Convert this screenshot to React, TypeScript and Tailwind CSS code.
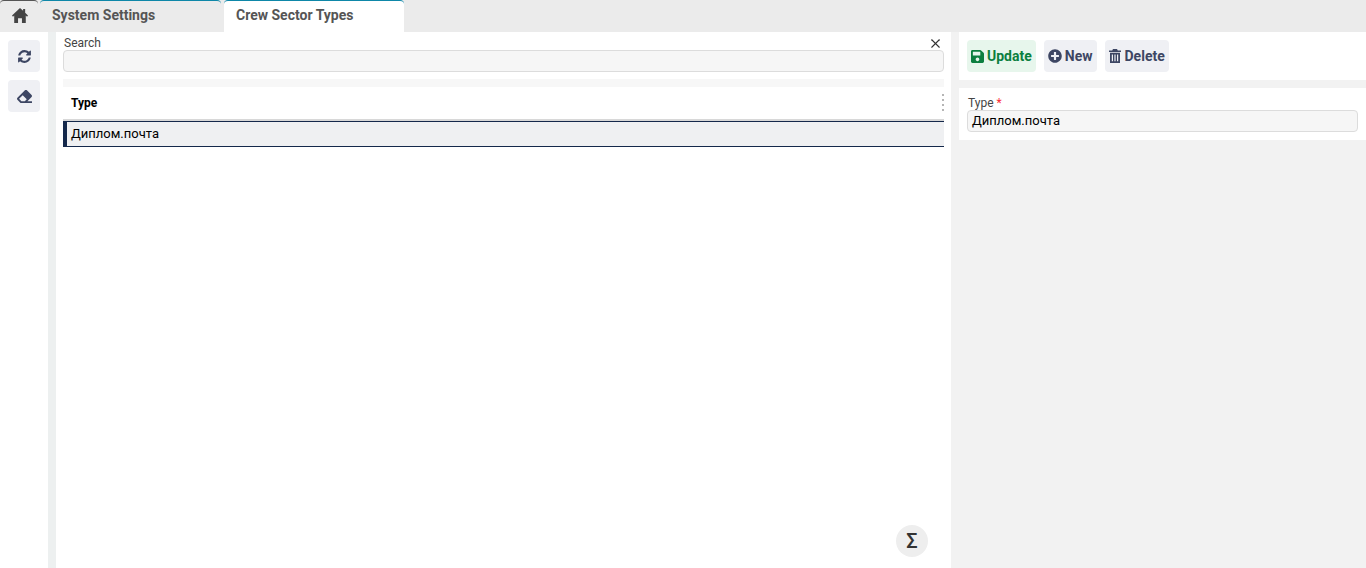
import { FaSave, FaPlusCircle, FaEraser } from 'react-icons/fa'
import { X } from 'lucide-react'

function HomeIcon() {
  return (
    <svg width="16" height="15" viewBox="0 0 18 16" preserveAspectRatio="none" fill="currentColor">
      <path d="M9 0l3.500 3V1h2.300v4l3.200 2.900-1.100 1.300L15.500 8v8h-4.300v-5H6.800v5H2.500V8L1.100 9.200 0 7.900z" />
    </svg>
  )
}

function RefreshIcon() {
  return (
    <svg width="15" height="15" viewBox="0 0 1792 1792" fill="currentColor">
      <path d="M1639 1056q0 5-1 7-64 268-268 434.500t-478 166.500q-146 0-282.500-55t-243.500-157l-129 129q-19 19-45 19t-45-19-19-45v-448q0-26 19-45t45-19h448q26 0 45 19t19 45-19 45l-137 137q71 66 161 102t187 36q134 0 250-65t186-179q11-17 53-117 8-23 30-23h192q13 0 22.500 9.500t9.500 22.500zm25-800v448q0 26-19 45t-45 19h-448q-26 0-45-19t-19-45 19-45l138-138q-148-137-349-137-134 0-250 65t-186 179q-11 17-53 117-8 23-30 23h-199q-13 0-22.500-9.500t-9.500-22.500v-7q65-268 270-434.500t480-166.500q146 0 284 55.500t245 156.500l130-129q19-19 45-19t45 19 19 45z" />
    </svg>
  )
}

function TrashIcon() {
  return (
    <svg width="12" height="14" viewBox="0 0 12 14" fill="currentColor" className="mr-px">
      <path d="M4 0h4l.8 1.500H12V3H0V1.500h3.200z" />
      <path d="M1 3.800h10V14H1zM2.800 5.500v6.800h1.200V5.500zM5.400 5.500v6.800h1.200V5.500zM8 5.500v6.800h1.200V5.500z" fillRule="evenodd" />
    </svg>
  )
}

function ActionButton({ icon, label, className }: { icon: React.ReactNode; label: string; className: string }) {
  return (
    <button className={`h-8 flex items-center gap-[3px] px-1 rounded text-sm font-bold ${className}`}>
      {icon}
      {label}
    </button>
  )
}

export default function App() {
  return (
    <div className="h-[568px] w-[1366px] overflow-hidden flex flex-col bg-[#f2f2f2] text-[13px] text-black font-['Roboto',sans-serif]">
      {/* TABS */}
      <div className="h-8 shrink-0 bg-[#ebebeb] flex items-stretch">
        <div className="w-[38px] pb-[3px] pl-[2px] flex items-center justify-center border-t border-[#555] rounded-t text-[#444]">
          <HomeIcon />
        </div>
        <div className="w-[181px] ml-[2px] pl-3 pb-[3px] flex items-center border-t border-[#0e87a8] rounded-t text-sm font-bold text-[#555]">
          System Settings
        </div>
        <div className="w-[180px] ml-[3px] pl-3 pb-[3px] flex items-center border-t border-[#0e87a8] rounded-t bg-white text-sm font-bold text-[#555]">
          Crew Sector Types
        </div>
      </div>

      <div className="flex-1 flex min-h-0">
        {/* SIDE TOOLS */}
        <div className="w-12 shrink-0 bg-white pt-2 pl-2 flex flex-col gap-2">
          <button className="w-8 h-8 rounded bg-[#eff0f4] text-[#3d4663] flex items-center justify-center">
            <RefreshIcon />
          </button>
          <button className="w-8 h-8 rounded bg-[#eff0f4] text-[#3d4663] flex items-center justify-center">
            <FaEraser className="w-[15px] h-[15px]" />
          </button>
        </div>
        <div className="w-2 shrink-0 bg-[#edf0f0]" />

        {/* LIST */}
        <div className="w-[895px] shrink-0 bg-white pl-[7px] pr-[7px] flex flex-col relative">
          <div className="flex justify-between items-center h-[18px] pt-1 pl-px text-xs text-[#444]">
            <span>Search</span>
            <X size={15} strokeWidth={1.7} className="text-[#333] mr-px" />
          </div>
          <div className="h-[22px] shrink-0 rounded border border-[#dcdcdc] bg-[#f6f6f6]" />
          <div className="h-2 shrink-0 mt-[7px] bg-[#f7f7f7]" />
          <div className="h-[34px] shrink-0 flex items-center justify-between pl-2 border-b-2 border-[#d8d8d8] relative">
            <span className="text-xs font-bold">Type</span>
            <div className="absolute right-0 top-[7px] flex flex-col gap-[3px]">
              <span className="w-[2px] h-[2px] bg-[#b5b5b5]" />
              <span className="w-[2px] h-[2px] bg-[#b5b5b5]" />
              <span className="w-[2px] h-[2px] bg-[#b5b5b5]" />
              <span className="w-[2px] h-[2px] bg-[#b5b5b5]" />
            </div>
          </div>
          <div className="h-[26px] shrink-0 flex items-center pl-1 pb-px bg-[#eff0f2] border-y border-[#14284b] border-l-4 text-[13px]">
            Диплом.почта
          </div>
          <button className="absolute right-[23px] bottom-[11px] w-8 h-8 rounded-full bg-[#eeeeee] text-[#333] flex items-center justify-center text-xl font-medium">
            Σ
          </button>
        </div>

        {/* FORM */}
        <div className="flex-1 pl-2 flex flex-col">
          <div className="h-12 bg-white flex items-center gap-2 pl-2">
            <ActionButton icon={<FaSave className="w-[13px] h-[15px]" />} label="Update" className="bg-[#e7f6ec] text-[#0c7f3f]" />
            <ActionButton icon={<FaPlusCircle className="w-[14px] h-[14px]" />} label="New" className="bg-[#eff0f4] text-[#3d4663]" />
            <ActionButton icon={<TrashIcon />} label="Delete" className="bg-[#eff0f4] text-[#3d4663]" />
          </div>
          <div className="h-[52px] mt-2 bg-white px-2 pt-2">
            <div className="text-xs leading-[14px] pl-px text-[#444]">Type <span className="text-red-500">*</span></div>
            <div className="h-[22px] rounded border border-[#dcdcdc] bg-[#f6f6f6] flex items-center px-1 text-[13px]">
              Диплом.почта
            </div>
          </div>
        </div>
      </div>
    </div>
  )
}
